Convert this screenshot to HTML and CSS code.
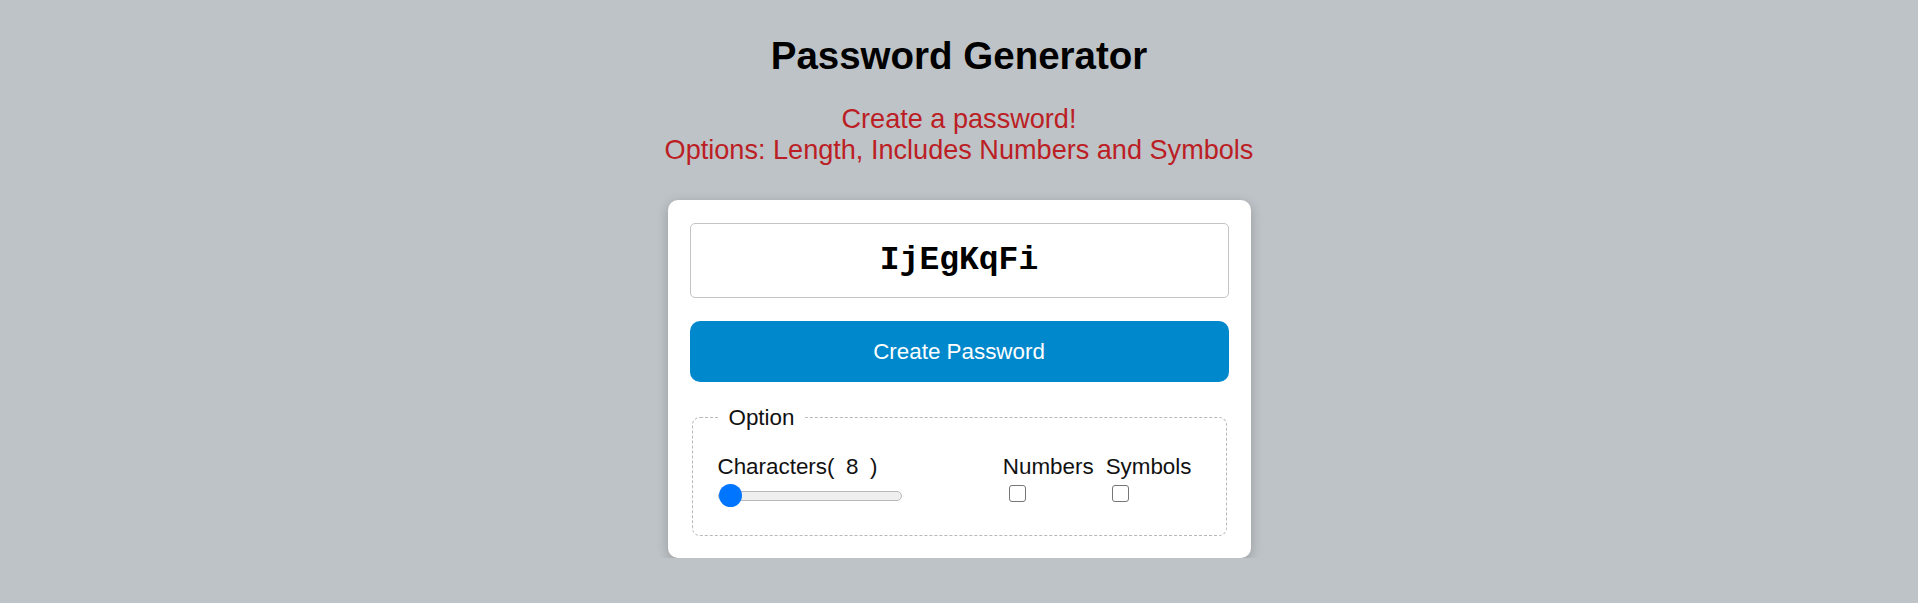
FILE: index.html
```html
<!DOCTYPE html>
<html lang="en">
<head>
<meta charset="utf-8">
<title>Password Generator</title>
<link rel="stylesheet" href="styles.css">
</head>
<body>
<main class="page">
  <h1 class="title">Password Generator</h1>
  <p class="intro">Create a password!<br>Options: Length, Includes Numbers and Symbols</p>
  <section class="card">
    <div class="output">IjEgKqFi</div>
    <button class="create" type="button">Create Password</button>
    <fieldset class="options">
      <legend class="options-legend">Option</legend>
      <div class="options-row">
        <div class="length">
          <label class="opt-label" for="len">Characters(<span class="count">8</span>)</label>
          <input class="range" id="len" type="range" min="8" max="32" value="8">
        </div>
        <div class="checks">
          <label class="check">
            <span class="opt-label">Numbers</span>
            <input class="box" type="checkbox">
          </label>
          <label class="check">
            <span class="opt-label">Symbols</span>
            <input class="box" type="checkbox">
          </label>
        </div>
      </div>
    </fieldset>
  </section>
</main>
</body>
</html>
```
FILE: styles.css
```css
html, body {
  margin: 0;
  padding: 0;
}
body {
  background: #bec3c7;
  font-family: "Liberation Sans", Arial, sans-serif;
  color: #111;
}
.page {
  display: flex;
  flex-direction: column;
  align-items: center;
  padding-top: 34px;
}
.title {
  margin: 0;
  font-size: 38.5px;
  font-weight: bold;
  line-height: 44px;
  color: #000;
}
.intro {
  margin: 25px 0 0;
  font-size: 27.1px;
  line-height: 31px;
  text-align: center;
  color: #bb1e24;
}
.card {
  margin-top: 35px;
  width: 539px;
  padding: 23px 22px 22px;
  background: #fff;
  border-radius: 10px;
  box-shadow: 0 3px 12px rgba(0, 0, 0, 0.22);
  display: flex;
  flex-direction: column;
}
.output {
  height: 73px;
  border: 1px solid #c4c4c4;
  border-radius: 5px;
  display: flex;
  align-items: center;
  justify-content: center;
  font-family: "Liberation Mono", "Courier New", monospace;
  font-weight: bold;
  font-size: 33px;
  color: #000;
}
.create {
  margin-top: 23px;
  height: 61px;
  border: none;
  border-radius: 10px;
  background: #0088cc;
  color: #fff;
  font-family: "Liberation Sans", Arial, sans-serif;
  font-size: 22.4px;
}
.options {
  margin: 23px 2px 0;
  padding: 24px 25px 28px;
  border: 1px dashed #b8b8b8;
  border-radius: 8px;
}
.options-legend {
  padding: 0 11px;
  font-size: 22.4px;
  line-height: 25px;
}
.options-row {
  display: flex;
  align-items: flex-start;
}
.length {
  display: flex;
  flex-direction: column;
  align-items: flex-start;
}
.opt-label {
  font-size: 22.4px;
  line-height: 25px;
}
.count {
  margin: 0 11.5px;
}
.range {
  -webkit-appearance: none;
  appearance: none;
  margin: 5px 0 0;
  width: 184px;
  height: 23px;
  background: transparent;
}
.range::-webkit-slider-runnable-track {
  height: 10px;
  background: #efefef;
  border: 1px solid #b9b9b9;
  border-radius: 5px;
  box-sizing: border-box;
}
.range::-webkit-slider-thumb {
  -webkit-appearance: none;
  appearance: none;
  width: 23px;
  height: 23px;
  margin-top: -7.5px;
  border-radius: 50%;
  background: #0075ff;
  border: none;
}
.checks {
  margin-left: auto;
  margin-right: 9px;
  display: flex;
  gap: 12px;
}
.check {
  display: flex;
  flex-direction: column;
  align-items: flex-start;
}
.box {
  -webkit-appearance: none;
  appearance: none;
  margin: 6px 0 0 6px;
  width: 17px;
  height: 17px;
  border: 1.5px solid #767676;
  border-radius: 3px;
  background: #fff;
  box-sizing: border-box;
}
```
